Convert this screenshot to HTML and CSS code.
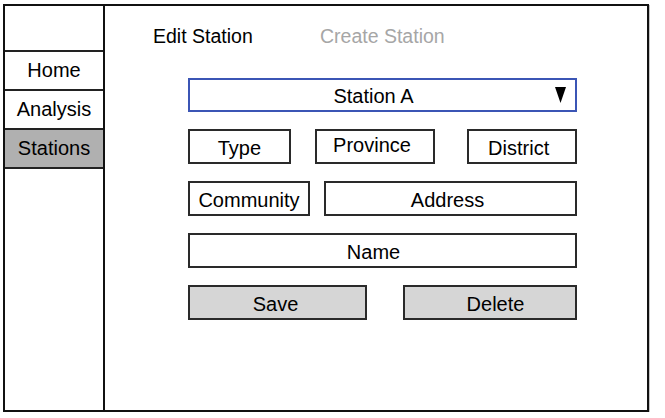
FILE: index.html
```html
<!DOCTYPE html>
<html>
<head>
<meta charset="utf-8">
<link rel="stylesheet" href="styles.css">
</head>
<body>
<div class="frame">
  <nav class="sidebar">
    <div class="side-blank"></div>
    <div class="side-item">Home</div>
    <div class="side-item">Analysis</div>
    <div class="side-item active">Stations</div>
  </nav>
  <main class="main">
    <div class="tabs">
      <span class="tab tab-active">Edit Station</span>
      <span class="tab tab-muted">Create Station</span>
    </div>
    <div class="form">
      <div class="select">
        <span class="select-label">Station A</span>
        <svg class="caret" width="11" height="16" viewBox="0 0 11 16"><polygon points="0,0 11,0 5.5,16" fill="#000"/></svg>
      </div>
      <div class="row row-three">
        <div class="field f-type">Type</div>
        <div class="field f-province"><span class="raise">Province</span></div>
        <div class="field f-district">District</div>
      </div>
      <div class="row row-two">
        <div class="field f-community">Community</div>
        <div class="field f-address">Address</div>
      </div>
      <div class="row">
        <div class="field f-name">Name</div>
      </div>
      <div class="row row-buttons">
        <div class="field btn f-save">Save</div>
        <div class="field btn f-delete">Delete</div>
      </div>
    </div>
  </main>
</div>
</body>
</html>
```
FILE: styles.css
```css
* { box-sizing: border-box; }
html, body { margin: 0; padding: 0; background: #fff; }
body {
  font-family: "Liberation Sans", Arial, sans-serif;
  font-size: 20px;
  color: #000;
}
.frame {
  display: flex;
  margin: 4px 0 0 3px;
  width: 646px;
  height: 408px;
  border: 2px solid #111;
  box-shadow: 1px 1px 0 #c4c4c4;
}
.sidebar {
  width: 100px;
  border-right: 2px solid #111;
  display: flex;
  flex-direction: column;
}
.side-blank {
  height: 46px;
  border-bottom: 2px solid #222;
}
.side-item {
  height: 39px;
  border-bottom: 2px solid #222;
  display: flex;
  align-items: center;
  justify-content: center;
  padding-bottom: 1px;
}
.side-item.active { background: #b0b0b0; }
.main {
  flex: 1;
  padding: 19px 0 0 48px;
}
.tabs {
  display: flex;
  line-height: 22px;
  height: 22px;
  font-size: 19.5px;
}
.tab-active { width: 167px; }
.tab-muted { color: #a6a6a6; }
.form {
  margin: 31px 0 0 35px;
  width: 389px;
  display: flex;
  flex-direction: column;
  gap: 17px;
}
.select {
  height: 34px;
  border: 2px solid #3b55b5;
  display: flex;
  align-items: center;
  justify-content: center;
  position: relative;
  padding: 3px 18px 0 0;
}
.caret {
  position: absolute;
  right: 9px;
  top: 7px;
}
.row {
  display: flex;
  height: 35px;
}
.row-three { justify-content: space-between; }
.field {
  height: 35px;
  border: 2px solid #2a2a2a;
  display: flex;
  align-items: center;
  justify-content: center;
  padding-top: 4px;
}
.raise { position: relative; top: -3px; }
.f-type { width: 103px; }
.f-province { width: 121px; margin-left: 24px; margin-right: 32px; padding-right: 6px; }
.f-district { width: 110px; padding-right: 7px; }
.f-community { width: 122px; }
.f-address { flex: 1; margin-left: 14px; padding-right: 6px; }
.f-name { flex: 1; padding-right: 18px; }
.row-buttons { justify-content: space-between; }
.btn { background: #d6d6d6; }
.f-save { width: 179px; padding-right: 4px; }
.f-delete { width: 174px; padding-left: 11px; }
```
